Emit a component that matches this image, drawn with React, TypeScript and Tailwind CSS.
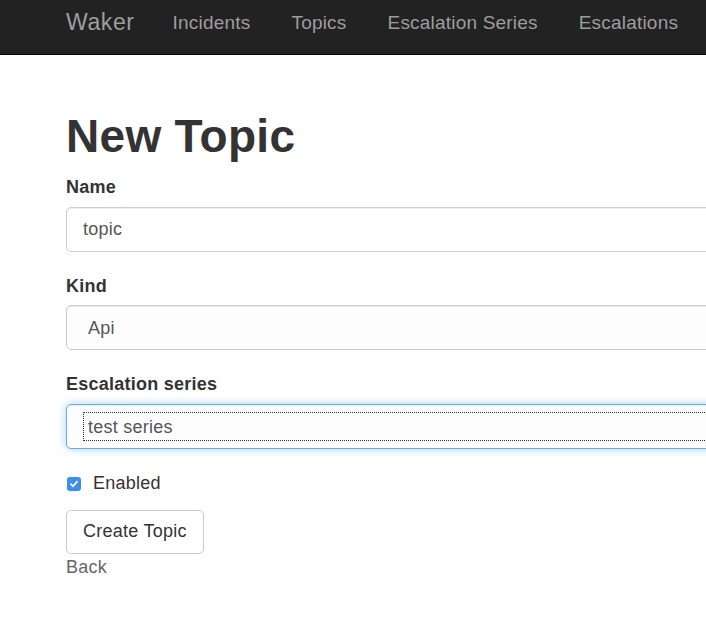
import React from "react";

export default function App() {
  const font = { fontFamily: '"Liberation Sans", Arial, Helvetica, sans-serif' };
  return (
    <div className="w-[706px] h-[626px] overflow-hidden bg-white text-[#333] text-[18px] leading-[25.7px]" style={font}>
      <nav className="h-[55px] bg-[#222] border-b border-[#080808] flex items-center pb-[9px] pl-[66px] whitespace-nowrap">
        <span className="text-[23px] text-[#9d9d9d] mr-[38px] tracking-[0.6px]">Waker</span>
        <div className="flex gap-[41px] text-[19px] tracking-[0.2px] text-[#9d9d9d]">
          <span>Incidents</span>
          <span>Topics</span>
          <span>Escalation Series</span>
          <span>Escalations</span>
        </div>
      </nav>
      <div className="pl-[66px] pt-[56px] tracking-[0.25px]">
        <h1 className="text-[46px] leading-[51px] font-bold tracking-[0.3px] text-[#333] mb-[13px]">New Topic</h1>

        <div className="mb-[22px]">
          <label className="block font-bold mb-[6px]">Name</label>
          <div className="w-[900px] h-[45px] border border-[#ccc] rounded-[5px] shadow-[inset_0_1px_1px_rgba(0,0,0,0.075)] flex items-center pl-[16px] pt-[2px] text-[#555]">
            topic
          </div>
        </div>

        <div className="mb-[22px]">
          <label className="block font-bold mb-[6px]">Kind</label>
          <div className="w-[900px] h-[45px] border border-[#ccc] rounded-[5px] shadow-[inset_0_1px_1px_rgba(0,0,0,0.075)] flex items-center pl-[21px] pt-[2px] text-[#555] bg-[#fdfdfd]">
            Api
          </div>
        </div>

        <div className="mb-[22px]">
          <label className="block font-bold mb-[6px]">Escalation series</label>
          <div className="w-[900px] h-[45px] border border-[#66afe9] rounded-[5px] shadow-[inset_0_1px_1px_rgba(0,0,0,0.075),0_0_8px_rgba(102,175,233,0.6)] flex items-center pl-[16px] text-[#555] bg-[#fdfdfd]">
            <div className="flex-1 h-[29px] border border-dotted border-[#333] flex items-center pl-[4px] pt-[2px]">
              test series
            </div>
          </div>
        </div>

        <div className="flex items-center h-[26px] mb-[13px]">
          <span className="w-[14px] h-[14px] ml-[1px] rounded-[3px] bg-[#3b8ff0] flex items-center justify-center">
            <svg width="10" height="10" viewBox="0 0 10 10">
              <path d="M2 5.2 L4.1 7.3 L8 2.6" fill="none" stroke="white" strokeWidth="1.7" strokeLinecap="round" strokeLinejoin="round" />
            </svg>
          </span>
          <span className="ml-[12px] text-[#333]">Enabled</span>
        </div>

        <button className="h-[44px] px-[16px] border border-[#ccc] rounded-[5px] bg-white text-[#333] text-[18px] tracking-[0.25px]" style={font}>
          Create Topic
        </button>
        <div className="text-[#666] mt-[1px]">Back</div>
      </div>
    </div>
  );
}
